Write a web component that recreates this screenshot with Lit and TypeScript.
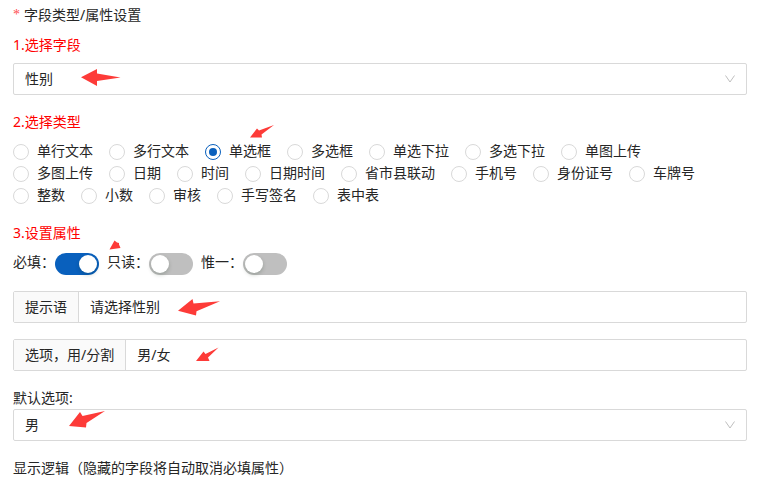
import { LitElement, html, css, svg } from "lit";
import { customElement, state } from "lit/decorators.js";

type Arrow = { cls: string; w: number; h: number; points: string };

const arrow = (a: Arrow) => html`<svg class="arrow ${a.cls}" width=${a.w} height=${a.h}
  viewBox="0 0 ${a.w} ${a.h}" aria-hidden="true">${svg`<polygon points=${a.points}></polygon>`}</svg>`;

const arrows = {
  field: { cls: "at-field", w: 40, h: 17, points: "0,8.3 16,0 16,4.5 39.5,8.5 16,12 16,17" },
  type: { cls: "at-type", w: 24, h: 13, points: "0,12.5 7,3.5 9,5.5 24,0 11.5,9.5 12,12.5" },
  required: { cls: "at-required", w: 12, h: 10, points: "0.5,9.5 5.5,0.5 8,2.5 10,3 10,4.5 11.5,8" },
  hint: { cls: "at-hint", w: 42, h: 17, points: "0,11.7 14.5,0 15.5,4.6 42,2.3 18.5,12.3 18,16.6" },
  options: { cls: "at-options", w: 23, h: 15, points: "0,14 7.5,4.5 9.5,7 22.5,0.5 12,10.5 13.5,14" },
  preset: { cls: "at-preset", w: 36, h: 17, points: "0,15 11,1 13.5,5 36,0 17.5,12 17,16.5" },
};

@customElement("app-root")
export class AppRoot extends LitElement {
  @state() private type = "单选框";

  private types = [
    "单行文本", "多行文本", "单选框", "多选框", "单选下拉", "多选下拉", "单图上传",
    "多图上传", "日期", "时间", "日期时间", "省市县联动", "手机号", "身份证号", "车牌号",
    "整数", "小数", "审核", "手写签名", "表中表",
  ];

  private switches = [
    { name: "必填", on: true },
    { name: "只读", on: false },
    { name: "惟一", on: false },
  ];

  static styles = css`
    :host {
      display: block;
      color: #262626;
      font: 14px/22px "Noto Sans", "Noto Sans CJK SC", sans-serif;
    }
    * { box-sizing: border-box; }
    .form { padding: 4px 12px 4px 13px; }
    .title, .note { margin: 0; font-size: 14px; font-weight: 400; }
    .title { display: flex; gap: 4px; margin-bottom: 8px; }
    .star { color: #ff4d4f; font-family: "Liberation Serif", serif; }
    .section { margin: 0 0 16px; padding: 0; border: 0; min-width: 0; position: relative; }
    .heading { display: block; padding: 0; margin-bottom: 7px; color: #f00; }
    .box { position: relative; display: grid; align-items: center; }
    select, input { font: inherit; color: inherit; }
    select {
      appearance: none;
      grid-area: 1 / 1;
      width: 100%;
      height: 32px;
      padding: 0 32px 0 11px;
      border: 1px solid #d9d9d9;
      border-radius: 2px;
      background: #fff;
    }
    .chevron {
      grid-area: 1 / 1;
      justify-self: end;
      margin-right: 11px;
      fill: none;
      stroke: #bfbfbf;
      pointer-events: none;
    }
    .radios { position: relative; display: flex; flex-wrap: wrap; }
    .radio { display: flex; align-items: center; gap: 8px; margin-right: 16px; }
    .radio input {
      appearance: none;
      width: 16px;
      height: 16px;
      margin: 2px 0 0;
      border: 1px solid #d9d9d9;
      border-radius: 50%;
      background: #fff;
      display: grid;
      place-items: center;
    }
    .radio input:checked { border-color: #0960bd; }
    .radio input:checked::before {
      content: "";
      width: 8px;
      height: 8px;
      border-radius: 50%;
      background: #0960bd;
    }
    .switches { position: relative; display: flex; gap: 8px; padding-top: 2px; line-height: 18px; }
    .switch { display: flex; }
    .switch input {
      appearance: none;
      width: 44px;
      height: 22px;
      margin: 0;
      padding: 2px;
      border-radius: 11px;
      background: #bfbfbf;
      display: flex;
    }
    .switch input::before {
      content: "";
      width: 18px;
      height: 18px;
      border-radius: 50%;
      background: #fff;
      box-shadow: 0 2px 4px rgba(0, 35, 11, 0.2);
    }
    .switch input:checked { background: #0960bd; justify-content: flex-end; }
    .group {
      position: relative;
      display: flex;
      height: 32px;
      margin-bottom: 16px;
      border: 1px solid #d9d9d9;
      border-radius: 2px;
      line-height: 30px;
    }
    .addon { padding: 0 11px; background: #fafafa; border-right: 1px solid #d9d9d9; }
    .group input { flex: 1; min-width: 0; padding: 0 11px; border: 0; background: none; }
    .label { display: block; }
    .arrow { position: absolute; fill: #fd3b38; pointer-events: none; }
    .at-field { left: 68px; top: 6px; }
    .at-type { left: 237px; top: -15px; }
    .at-required { left: 96px; top: -11px; }
    .at-hint { left: 164px; top: 7px; }
    .at-options { left: 182px; top: 7px; }
    .at-preset { left: 56px; top: 2px; }
  `;

  private chevron() {
    return html`<svg class="chevron" width="12" height="12" viewBox="0 0 12 12" aria-hidden="true">
      <path d="M1.5 2.5 L6 9 L10.5 2.5"></path>
    </svg>`;
  }

  render() {
    return html`
      <form class="form">
        <h1 class="title"><span class="star">*</span>字段类型/属性设置</h1>
        <div class="section">
          <label class="heading" for="field">1.选择字段</label>
          <div class="box">
            <select id="field"><option>性别</option></select>
            ${this.chevron()} ${arrow(arrows.field)}
          </div>
        </div>
        <fieldset class="section">
          <legend class="heading">2.选择类型</legend>
          <div class="radios">
            ${this.types.map((t) => html`<label class="radio"><input type="radio" name="type"
              .checked=${t === this.type} @change=${() => (this.type = t)}>${t}</label>`)}
            ${arrow(arrows.type)}
          </div>
        </fieldset>
        <fieldset class="section">
          <legend class="heading">3.设置属性</legend>
          <div class="switches">
            ${this.switches.map((s) => html`<label class="switch">${s.name}：<input type="checkbox"
              role="switch" ?checked=${s.on}></label>`)}
            ${arrow(arrows.required)}
          </div>
        </fieldset>
        <div class="group">
          <label class="addon" for="hint">提示语</label>
          <input id="hint" type="text" value="请选择性别">
          ${arrow(arrows.hint)}
        </div>
        <div class="group">
          <label class="addon" for="options">选项，用/分割</label>
          <input id="options" type="text" value="男/女">
          ${arrow(arrows.options)}
        </div>
        <div class="section">
          <label class="label" for="preset">默认选项:</label>
          <div class="box">
            <select id="preset"><option>男</option><option>女</option></select>
            ${this.chevron()} ${arrow(arrows.preset)}
          </div>
        </div>
        <p class="note">显示逻辑（隐藏的字段将自动取消必填属性）</p>
      </form>
    `;
  }
}
